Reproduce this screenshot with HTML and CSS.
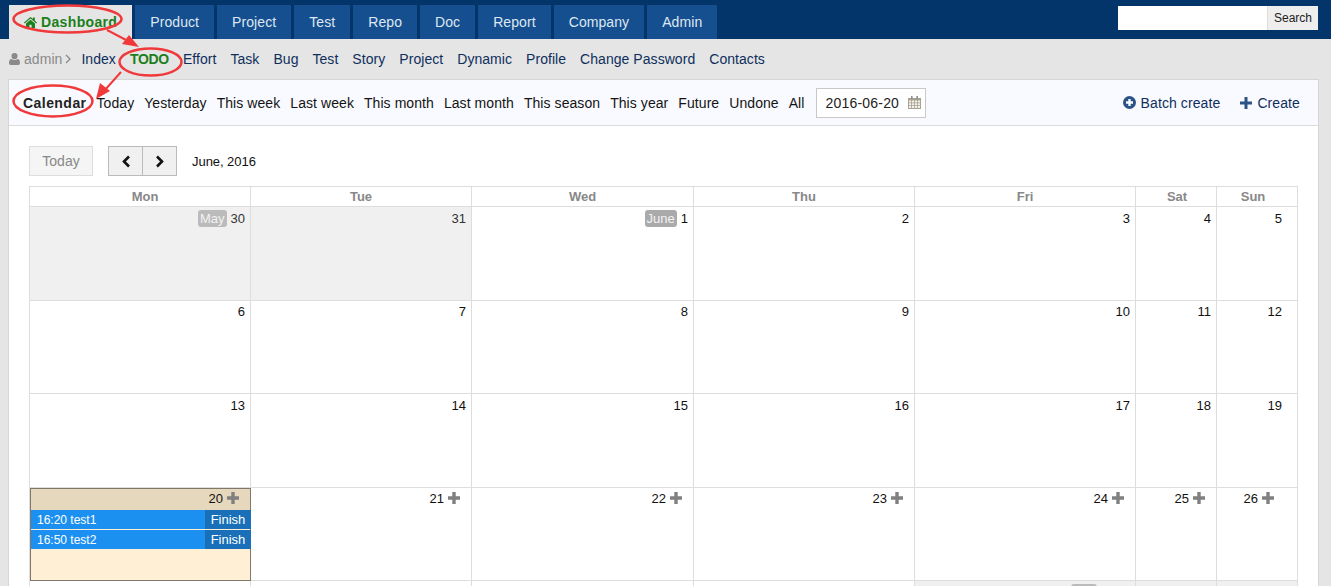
FILE: index.html
```html
<!DOCTYPE html>
<html lang="en">
<head>
<meta charset="utf-8">
<title>Calendar - TODO</title>
<link rel="stylesheet" href="styles.css">
</head>
<body>
<header class="topbar">
  <nav class="mainnav">
    <a class="tab tab-active" href="#"><svg class="ico-home" viewBox="0 0 13 11"><path d="M6.5 0 0 5.6l.7.8L6.5 1.5l5.8 4.9.7-.8L10.800 3.700V.6H9v1.500ZM2 6.500V11h3.400V7.700h2.200V11H11V6.500L6.500 2.700Z"/></svg>Dashboard</a>
    <a class="tab" href="#">Product</a>
    <a class="tab" href="#">Project</a>
    <a class="tab" href="#">Test</a>
    <a class="tab" href="#">Repo</a>
    <a class="tab" href="#">Doc</a>
    <a class="tab" href="#">Report</a>
    <a class="tab" href="#">Company</a>
    <a class="tab" href="#">Admin</a>
  </nav>
  <form class="search"><input class="search-input" type="text"><button class="search-btn" type="button">Search</button></form>
</header>

<nav class="subnav">
  <span class="crumb"><svg class="ico-user" viewBox="0 0 11 12"><path d="M5.500 0a3 3 0 0 1 3 3.200 3 3 0 0 1-6 0 3 3 0 0 1 3-3.200ZM2.400 6c.8.700 1.900 1.100 3.100 1.100S7.800 6.700 8.600 6C10.200 6.200 11 7.600 11 9.700c0 1.400-.9 2.300-2.100 2.300H2.100C.9 12 0 11.100 0 9.700 0 7.600.8 6.200 2.400 6Z"/></svg>admin<svg class="ico-chev" viewBox="0 0 6 10"><path d="M1 1l4 4-4 4" fill="none" stroke="currentColor" stroke-width="1.300"/></svg></span>
  <a href="#">Index</a>
  <a class="sub-active" href="#">TODO</a>
  <a href="#">Effort</a>
  <a href="#">Task</a>
  <a href="#">Bug</a>
  <a href="#">Test</a>
  <a href="#">Story</a>
  <a href="#">Project</a>
  <a href="#">Dynamic</a>
  <a href="#">Profile</a>
  <a href="#">Change Password</a>
  <a href="#">Contacts</a>
</nav>

<main class="panel">
  <div class="toolbar">
    <a class="filter filter-active" href="#">Calendar</a>
    <a class="filter" href="#">Today</a>
    <a class="filter" href="#">Yesterday</a>
    <a class="filter" href="#">This week</a>
    <a class="filter" href="#">Last week</a>
    <a class="filter" href="#">This month</a>
    <a class="filter" href="#">Last month</a>
    <a class="filter" href="#">This season</a>
    <a class="filter" href="#">This year</a>
    <a class="filter" href="#">Future</a>
    <a class="filter" href="#">Undone</a>
    <a class="filter" href="#">All</a>
    <div class="datebox"><span>2016-06-20</span><svg class="ico-cal" viewBox="0 0 13 13"><path d="M0 2h13v11H0Z" fill="#a8a294"/><path d="M3 0h1.600v3H3ZM8.400 0H10v3H8.400Z" fill="#8f8f8f"/><path d="M1 4.500h2.200v2H1Zm3 0h2.200v2H4Zm3 0h2.200v2H7Zm3 0h2v2h-2ZM1 7.300h2.200v2H1Zm3 0h2.200v2H4Zm3 0h2.200v2H7Zm3 0h2v2h-2ZM1 10.100h2.200V12H1Zm3 0h2.200V12H4Zm3 0h2.200V12H7Zm3 0h2V12h-2Z" fill="#f3f1ea"/></svg></div>
    <div class="actions">
      <a class="action" href="#"><svg class="ico-act" viewBox="0 0 13 13"><path fill-rule="evenodd" d="M6.500 0a6.500 6.500 0 1 1 0 13 6.500 6.500 0 0 1 0-13ZM5.300 3v2.300H3v2.400h2.300V10h2.400V7.700H10V5.300H7.700V3Z"/></svg>Batch create</a>
      <a class="action" href="#"><svg class="ico-act ico-act-plus" viewBox="0 0 12 12"><path d="M4.500 0h3v4.500H12v3H7.500V12h-3V7.500H0v-3h4.500Z"/></svg>Create</a>
    </div>
  </div>

  <section class="content">
    <div class="calbar">
      <button class="btn-today" type="button">Today</button>
      <div class="pager">
        <button class="btn-page" type="button"><svg viewBox="0 0 10 13"><path d="M8 1.500 3 6.500l5 5" fill="none" stroke="#111" stroke-width="2.600"/></svg></button>
        <button class="btn-page" type="button"><svg viewBox="0 0 10 13"><path d="M2 1.500l5 5-5 5" fill="none" stroke="#111" stroke-width="2.600"/></svg></button>
      </div>
      <span class="cal-title">June, 2016</span>
    </div>

    <div class="cal">
      <div class="dow dow-mon">Mon</div><div class="dow">Tue</div><div class="dow">Wed</div><div class="dow">Thu</div><div class="dow">Fri</div><div class="dow dow-sat">Sat</div><div class="dow dow-sun">Sun</div>

      <div class="day day-out"><span class="month">May</span>30</div>
      <div class="day day-out">31</div>
      <div class="day"><span class="month month-cur">June</span>1</div>
      <div class="day">2</div><div class="day">3</div><div class="day">4</div><div class="day day-sun">5</div>

      <div class="day day-low">6</div><div class="day day-low">7</div><div class="day day-low">8</div><div class="day day-low">9</div><div class="day day-low">10</div><div class="day day-low">11</div><div class="day day-low day-sun">12</div>

      <div class="day">13</div><div class="day">14</div><div class="day">15</div><div class="day">16</div><div class="day">17</div><div class="day">18</div><div class="day day-sun">19</div>

      <div class="day-today">
        <div class="today-head">20<svg class="ico-plus" viewBox="0 0 12 12"><path d="M4.300 0h3.400v4.300H12v3.400H7.700V12H4.300V7.700H0V4.300h4.300Z"/></svg></div>
        <div class="event"><span class="event-name">16:20 test1</span><span class="event-btn">Finish</span></div>
        <div class="event"><span class="event-name">16:50 test2</span><span class="event-btn">Finish</span></div>
      </div>
      <div class="day day-low day-add">21<svg class="ico-plus" viewBox="0 0 12 12"><path d="M4.300 0h3.400v4.300H12v3.400H7.700V12H4.300V7.700H0V4.300h4.300Z"/></svg></div>
      <div class="day day-low day-add">22<svg class="ico-plus" viewBox="0 0 12 12"><path d="M4.300 0h3.400v4.300H12v3.400H7.700V12H4.300V7.700H0V4.300h4.300Z"/></svg></div>
      <div class="day day-low day-add">23<svg class="ico-plus" viewBox="0 0 12 12"><path d="M4.300 0h3.400v4.300H12v3.400H7.700V12H4.300V7.700H0V4.300h4.300Z"/></svg></div>
      <div class="day day-low day-add">24<svg class="ico-plus" viewBox="0 0 12 12"><path d="M4.300 0h3.400v4.300H12v3.400H7.700V12H4.300V7.700H0V4.300h4.300Z"/></svg></div>
      <div class="day day-low day-add">25<svg class="ico-plus" viewBox="0 0 12 12"><path d="M4.300 0h3.400v4.300H12v3.400H7.700V12H4.300V7.700H0V4.300h4.300Z"/></svg></div>
      <div class="day day-low day-add day-add-sun">26<svg class="ico-plus" viewBox="0 0 12 12"><path d="M4.300 0h3.400v4.300H12v3.400H7.700V12H4.300V7.700H0V4.300h4.300Z"/></svg></div>

      <div class="day"></div><div class="day"></div><div class="day"></div><div class="day"></div>
      <div class="day day-out"><span class="month month-stub"></span></div>
      <div class="day day-out"></div><div class="day day-out"></div>
    </div>
  </section>
</main>

<svg class="annotations" viewBox="0 0 1331 586" fill="none" stroke="#f0393a">
  <ellipse cx="67.500" cy="19" rx="54" ry="13.500" stroke-width="2.500"/>
  <ellipse cx="150.500" cy="62" rx="31" ry="13.500" stroke-width="2.500"/>
  <ellipse cx="53" cy="101" rx="39.500" ry="15.500" stroke-width="2.500"/>
  <path d="M107 30 128 41" stroke-width="2"/>
  <path d="M121 72 104 91" stroke-width="2"/>
  <path d="M139 47 122 44 129 35Z" fill="#f0393a" stroke="none"/>
  <path d="M96 99 100 83 110 91Z" fill="#f0393a" stroke="none"/>
</svg>
</body>
</html>
```
FILE: styles.css
```css
* { box-sizing: border-box; }
html, body {
  height: 586px;
  margin: 0;
  overflow: hidden;
}
body {
  position: relative;
  background: #e5e5e5;
  color: #141414;
  font-family: "Liberation Sans", Arial, sans-serif;
  font-size: 14px;
}
a { color: inherit; text-decoration: none; }

/* top bar */
.topbar {
  height: 39px;
  background: #03356a;
  display: flex;
  justify-content: space-between;
  align-items: flex-start;
  padding: 5px 13px 0 9px;
}
.mainnav { display: flex; gap: 3px; }
.tab {
  height: 34px;
  padding: 0 15px;
  display: flex;
  align-items: center;
  background: #154f8f;
  color: #dfe7f1;
  letter-spacing: .08px;
}
.tab-active {
  background: #e5e5e5;
  color: #1b7f1b;
  font-weight: bold;
  letter-spacing: .35px;
}
.ico-home { width: 13px; height: 11px; margin-right: 4px; fill: #1b7f1b; }
.search { display: flex; height: 24px; margin-top: 1px; }
.search-input { width: 149px; height: 24px; border: 0; background: #fff; padding: 0 6px; }
.search-btn {
  width: 51px;
  height: 24px;
  border: 0;
  border-left: 1px solid #ddd;
  background: #eee;
  color: #222;
  font: 12px "Liberation Sans", Arial, sans-serif;
  padding: 0;
}

/* secondary nav */
.subnav {
  height: 40px;
  padding-left: 9px;
  display: flex;
  align-items: center;
  gap: 14px;
  color: #0e2f5c;
  letter-spacing: .05px;
}
.crumb { display: flex; align-items: center; color: #8a8a8a; margin-right: -4px; }
.ico-user { width: 11px; height: 12px; margin: 0 4px 0 0; fill: #8a8a8a; }
.ico-chev { width: 6px; height: 10px; margin-left: 3px; }
.sub-active { color: #1b7f1b; font-weight: bold; letter-spacing: -.3px; }

/* panel */
.panel {
  width: 1311px;
  height: 507px;
  margin-left: 8px;
  background: #fff;
  border: 1px solid #d6d6d6;
  border-bottom: 0;
  overflow: hidden;
}
.toolbar {
  height: 46px;
  background: #f9faff;
  border-bottom: 1px solid #dcdcdc;
  display: flex;
  align-items: center;
  padding: 0 18px 0 14px;
  gap: 10px;
}
.filter { white-space: nowrap; letter-spacing: .07px; }
.filter-active { font-weight: bold; letter-spacing: .45px; color: #222; }
.datebox {
  width: 110px;
  height: 30px;
  margin-left: 2px;
  border: 1px solid #c8c8c8;
  background: #fff;
  display: flex;
  align-items: center;
  justify-content: space-between;
  padding: 0 4px 0 8px;
  color: #222;
  letter-spacing: .2px;
}
.ico-cal { width: 13px; height: 13px; }
.actions { margin-left: auto; display: flex; gap: 20px; color: #0e2f5c; letter-spacing: .1px; }
.action { display: flex; align-items: center; white-space: nowrap; }
.ico-act { width: 13px; height: 13px; margin-right: 5px; fill: #2c5387; }
.ico-act-plus { width: 12px; height: 12px; }

/* calendar */
.content { padding: 20px 0 0 20px; }
.calbar { display: flex; align-items: center; height: 30px; margin-bottom: 10px; }
.btn-today {
  width: 64px;
  height: 30px;
  border: 1px solid #ddd;
  background: #f5f5f5;
  color: #888;
  font: 14px "Liberation Sans", Arial, sans-serif;
  padding: 0;
}
.pager { display: flex; margin-left: 15px; }
.btn-page {
  width: 35px;
  height: 30px;
  border: 1px solid #bbb;
  background: #f0f0f0;
  padding: 0;
  display: flex;
  align-items: center;
  justify-content: center;
}
.btn-page + .btn-page { margin-left: -1px; }
.btn-page svg { width: 10px; height: 13px; }
.cal-title { margin-left: 15px; font-size: 13px; color: #111; letter-spacing: -.05px; }

.cal {
  display: grid;
  grid-template-columns: 221px 221px 222px 221px 221px 81px 81px;
  grid-template-rows: 20px 94px 93px 94px 93px 93px;
  width: 1269px;
  border-top: 1px solid #ddd;
  border-left: 1px solid #ddd;
  font-size: 13px;
}
.dow {
  border-right: 1px solid #ddd;
  border-bottom: 1px solid #ddd;
  text-align: center;
  font-weight: bold;
  line-height: 19px;
  color: #888;
}
.dow-mon { padding-left: 10px; }
.dow-sat { padding-left: 2px; }
.dow-sun { padding-right: 8px; }
.day {
  border-right: 1px solid #ddd;
  border-bottom: 1px solid #ddd;
  text-align: right;
  padding: 3px 5px 0 0;
  line-height: 17px;
  color: #111;
}
.day-low { padding-top: 2px; }
.day-sun { padding-right: 15px; }
.day-out { background: #f0f0f0; color: #333; }
.day-add { padding-right: 11px; }
.day-add-sun { padding-right: 23px; }
.month {
  display: inline-block;
  background: #bbb;
  color: #f2f2f2;
  border-radius: 3px;
  padding: 0 2px;
  margin-right: 4px;
}
.month-cur { background: #aaa; }
.month-stub { width: 26px; height: 17px; margin-right: 33px; vertical-align: top; }
.ico-plus { width: 12px; height: 12px; margin-left: 4px; fill: #808080; vertical-align: -1px; }

.day-today {
  border: 1px solid #807868;
  background: #ffefd5;
  min-width: 0;
}
.today-head {
  height: 21px;
  background: #e5d8bd;
  text-align: right;
  padding: 1px 11px 0 0;
  line-height: 17px;
  color: #111;
}
.event {
  display: flex;
  justify-content: space-between;
  height: 19px;
  margin: 0 -1px 1px 0;
  background: #1c90f0;
  color: #fff;
  font-size: 12px;
  line-height: 19px;
}
.event-name { padding-left: 6px; line-height: 21px; }
.event-btn { width: 46px; background: #196fb8; text-align: center; font-size: 13px; }

/* hand-drawn marks on top of the screenshot */
.annotations {
  position: absolute;
  left: 0;
  top: 0;
  width: 1331px;
  height: 586px;
  pointer-events: none;
}
```
